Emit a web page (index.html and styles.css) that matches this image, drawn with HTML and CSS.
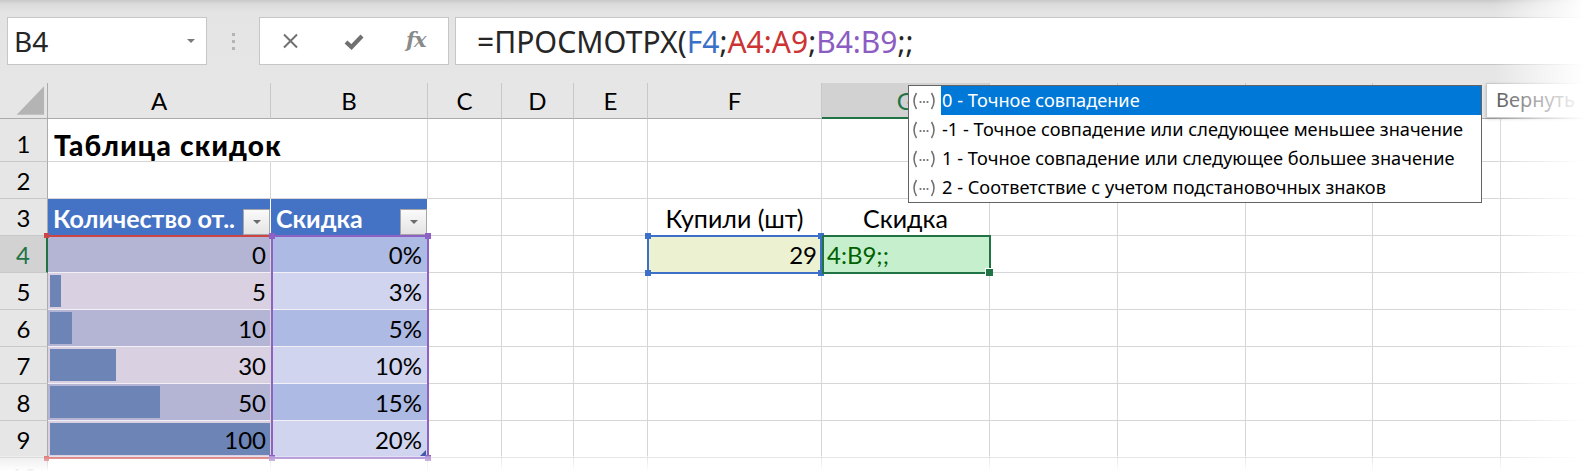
FILE: index.html
```html
<!DOCTYPE html>
<html lang="ru">
<head>
<meta charset="utf-8">
<title>Таблица скидок</title>
<link rel="stylesheet" href="styles.css">
</head>
<body>
<div class="app">
  <div class="topbar">
    <div class="namebox"><span class="nb-text">B4</span><span class="nb-arrow"></span></div>
    <div class="grip"><i></i><i></i><i></i></div>
    <div class="fxbox">
      <svg class="ico ico-x" width="17" height="16" viewBox="0 0 17 16"><path d="M2 1.5 L15 14.5 M15 1.5 L2 14.5"/></svg>
      <svg class="ico ico-check" width="20" height="17" viewBox="0 0 20 17"><path d="M2 9 L7.5 14 L18 3"/></svg>
      <span class="fx">fx</span>
    </div>
    <div class="formula">=ПРОСМОТРХ(<span class="ref-f">F4</span>;<span class="ref-a">A4:A9</span>;<span class="ref-b">B4:B9</span>;;</div>
  </div>

  <div class="sheet">
    <div class="cells">
      <!-- header row -->
      <div class="c corner"><svg width="48" height="36" viewBox="0 0 48 36"><path d="M17 33 L45 33 L45 4 Z"/></svg></div>
      <div class="c ch">A</div><div class="c ch">B</div><div class="c ch">C</div><div class="c ch">D</div><div class="c ch">E</div><div class="c ch">F</div><div class="c ch act">G</div><div class="c ch">H</div><div class="c ch">I</div><div class="c ch">J</div><div class="c ch">K</div><div class="c ch">L</div>

      <!-- row 1 -->
      <div class="c rh">1</div>
      <div class="c title">Таблица скидок</div><div class="c"></div><div class="c"></div><div class="c"></div><div class="c"></div><div class="c"></div><div class="c"></div><div class="c"></div><div class="c"></div><div class="c"></div><div class="c"></div><div class="c"></div>

      <!-- row 2 -->
      <div class="c rh">2</div>
      <div class="c"></div><div class="c"></div><div class="c"></div><div class="c"></div><div class="c"></div><div class="c"></div><div class="c"></div><div class="c"></div><div class="c"></div><div class="c"></div><div class="c"></div><div class="c"></div>

      <!-- row 3 -->
      <div class="c rh">3</div>
      <div class="c th"><span class="th-text">Количество от..</span><span class="fb"></span></div>
      <div class="c th"><span class="th-text">Скидка</span><span class="fb"></span></div>
      <div class="c"></div><div class="c"></div><div class="c"></div>
      <div class="c ctr">Купили (шт)</div>
      <div class="c ctr">Скидка</div>
      <div class="c"></div><div class="c"></div><div class="c"></div><div class="c"></div><div class="c"></div>

      <!-- row 4 -->
      <div class="c rh act">4</div>
      <div class="c num qa odd">0</div>
      <div class="c num pb odd">0%</div>
      <div class="c"></div><div class="c"></div><div class="c"></div>
      <div class="c num inp">29</div>
      <div class="c edit">4:B9;;</div>
      <div class="c"></div><div class="c"></div><div class="c"></div><div class="c"></div><div class="c"></div>

      <!-- row 5 -->
      <div class="c rh">5</div>
      <div class="c num qa even bar" style="--w: 11px">5</div>
      <div class="c num pb even">3%</div>
      <div class="c"></div><div class="c"></div><div class="c"></div><div class="c"></div><div class="c"></div><div class="c"></div><div class="c"></div><div class="c"></div><div class="c"></div><div class="c"></div>

      <!-- row 6 -->
      <div class="c rh">6</div>
      <div class="c num qa odd bar" style="--w: 22px">10</div>
      <div class="c num pb odd">5%</div>
      <div class="c"></div><div class="c"></div><div class="c"></div><div class="c"></div><div class="c"></div><div class="c"></div><div class="c"></div><div class="c"></div><div class="c"></div><div class="c"></div>

      <!-- row 7 -->
      <div class="c rh">7</div>
      <div class="c num qa even bar" style="--w: 66px">30</div>
      <div class="c num pb even">10%</div>
      <div class="c"></div><div class="c"></div><div class="c"></div><div class="c"></div><div class="c"></div><div class="c"></div><div class="c"></div><div class="c"></div><div class="c"></div><div class="c"></div>

      <!-- row 8 -->
      <div class="c rh">8</div>
      <div class="c num qa odd bar" style="--w: 110px">50</div>
      <div class="c num pb odd">15%</div>
      <div class="c"></div><div class="c"></div><div class="c"></div><div class="c"></div><div class="c"></div><div class="c"></div><div class="c"></div><div class="c"></div><div class="c"></div><div class="c"></div>

      <!-- row 9 -->
      <div class="c rh">9</div>
      <div class="c num qa even bar" style="--w: 220px">100</div>
      <div class="c num pb even last">20%<span class="tcorner"></span></div>
      <div class="c"></div><div class="c"></div><div class="c"></div><div class="c"></div><div class="c"></div><div class="c"></div><div class="c"></div><div class="c"></div><div class="c"></div><div class="c"></div>

      <!-- row 10 -->
      <div class="c rh">10</div>
      <div class="c"></div><div class="c"></div><div class="c"></div><div class="c"></div><div class="c"></div><div class="c"></div><div class="c"></div><div class="c"></div><div class="c"></div><div class="c"></div><div class="c"></div><div class="c"></div>
    </div>

    <div class="marks">
      <div class="rng rng-a"><i class="h tl"></i><i class="h bl"></i></div>
      <div class="rng rng-b"><i class="h tl"></i><i class="h tr"></i><i class="h bl"></i><i class="h br"></i></div>
      <div class="rng rng-f"><i class="h tl"></i><i class="h tr"></i><i class="h bl"></i><i class="h br"></i></div>
      <div class="rng rng-g"><i class="fill"></i></div>
    </div>
  </div>

  <div class="dropdown">
    <div class="dd-item sel"><svg class="dd-ico" width="28" height="20" viewBox="0 0 28 20"><path d="M6.5 2 Q1.5 10 6.5 18 M21.5 2 Q26.5 10 21.5 18"/><circle cx="10.5" cy="11" r="1.1"/><circle cx="14" cy="11" r="1.1"/><circle cx="17.5" cy="11" r="1.1"/></svg><span class="dd-text">0 - Точное совпадение</span></div>
    <div class="dd-item"><svg class="dd-ico" width="28" height="20" viewBox="0 0 28 20"><path d="M6.5 2 Q1.5 10 6.5 18 M21.5 2 Q26.5 10 21.5 18"/><circle cx="10.5" cy="11" r="1.1"/><circle cx="14" cy="11" r="1.1"/><circle cx="17.5" cy="11" r="1.1"/></svg><span class="dd-text">-1 - Точное совпадение или следующее меньшее значение</span></div>
    <div class="dd-item"><svg class="dd-ico" width="28" height="20" viewBox="0 0 28 20"><path d="M6.5 2 Q1.5 10 6.5 18 M21.5 2 Q26.5 10 21.5 18"/><circle cx="10.5" cy="11" r="1.1"/><circle cx="14" cy="11" r="1.1"/><circle cx="17.5" cy="11" r="1.1"/></svg><span class="dd-text">1 - Точное совпадение или следующее большее значение</span></div>
    <div class="dd-item"><svg class="dd-ico" width="28" height="20" viewBox="0 0 28 20"><path d="M6.5 2 Q1.5 10 6.5 18 M21.5 2 Q26.5 10 21.5 18"/><circle cx="10.5" cy="11" r="1.1"/><circle cx="14" cy="11" r="1.1"/><circle cx="17.5" cy="11" r="1.1"/></svg><span class="dd-text">2 - Соответствие с учетом подстановочных знаков</span></div>
  </div>

  <div class="tooltip">Вернуть</div>

  <div class="fade fade-top"></div>
  <div class="fade fade-right"></div>
  <div class="fade fade-bottom"></div>
</div>
</body>
</html>
```

FILE: styles.css
```css
* { box-sizing: border-box; }
html, body { margin: 0; padding: 0; background: #fff; }

.app {
  position: relative;
  width: 1584px;
  height: 474px;
  overflow: hidden;
  font-family: "Noto Sans", "Open Sans", sans-serif;
}

/* ---------- formula bar ---------- */
.topbar {
  height: 83px;
  background: linear-gradient(#d6d6d6 0, #e4e4e4 12px, #e6e6e6 100%);
  display: flex;
  align-items: flex-start;
  padding: 17px 0 0 7px;
}
.namebox {
  width: 200px;
  height: 48px;
  background: #fff;
  border: 1px solid #c6c6c6;
  display: flex;
  align-items: center;
  padding-left: 6px;
}
.nb-text {
  font-size: 28px;
  color: #262626;
  line-height: 1;
  margin-top: -1px;
}
.nb-arrow {
  margin-left: auto;
  margin-right: 11px;
  width: 0; height: 0;
  border-left: 4px solid transparent;
  border-right: 4px solid transparent;
  border-top: 4px solid #7a7a7a;
}
.grip {
  width: 52px;
  height: 48px;
  display: flex;
  flex-direction: column;
  align-items: center;
  justify-content: center;
  gap: 4px;
}
.grip i {
  display: block;
  width: 3px;
  height: 3px;
  background: #b4b4b4;
}
.fxbox {
  width: 190px;
  height: 48px;
  background: #fff;
  border: 1px solid #c6c6c6;
  display: flex;
  align-items: center;
  padding-left: 22px;
}
.ico path { fill: none; stroke: #707070; }
.ico-x path { stroke-width: 2; }
.ico-check { margin-left: 45px; }
.ico-check path { stroke-width: 4.2; stroke-linejoin: miter; }
.fx {
  margin-left: 42px;
  font-family: "DejaVu Serif", "Liberation Serif", serif;
  font-style: italic;
  font-weight: 700;
  font-size: 21px;
  color: #8a8a8a;
  letter-spacing: -1px;
  line-height: 1;
  margin-top: -4px;
}
.formula {
  margin-left: 6px;
  flex: 1;
  height: 48px;
  background: #fff;
  border: 1px solid #c6c6c6;
  border-right: none;
  padding-left: 21px;
  display: flex;
  align-items: center;
  font-size: 30px;
  color: #262626;
  white-space: nowrap;
}
.ref-f { color: #3a70c7; }
.ref-a { color: #cc3333; }
.ref-b { color: #8b5cc2; }

/* ---------- sheet ---------- */
.sheet {
  position: relative;
}
.cells, .marks {
  display: grid;
  grid-template-columns: 48px 223px 157px 74px 72px 74px 174px 168px 128px 128px 127px 128px 100px;
  grid-template-rows: 36px 43px repeat(9, 37px);
}
.marks {
  position: absolute;
  inset: 0;
  pointer-events: none;
}
.c {
  border-right: 1px solid #d6d6d6;
  border-bottom: 1px solid #d6d6d6;
  display: flex;
  align-items: flex-end;
  padding: 0 4px 3px 4px;
  font-family: "Lato", "Liberation Sans", sans-serif;
  font-size: 24px;
  line-height: 28px;
  color: #000;
  white-space: nowrap;
  min-width: 0;
}
.corner {
  background: #e6e6e6;
  border-right-color: #ababab;
  border-bottom-color: #ababab;
  padding: 0;
}
.corner svg { display: block; }
.corner path { fill: #b4b4b4; }
.ch {
  background: #e6e6e6;
  border-right-color: #c8c8c8;
  border-bottom-color: #ababab;
  justify-content: center;
  padding-bottom: 3px;
}
.ch.act {
  background: #d2d2d2;
  color: #217346;
  border-bottom: 2px solid #217346;
  padding-bottom: 2px;
}
.rh {
  background: #e6e6e6;
  border-right-color: #ababab;
  border-bottom-color: #c8c8c8;
  justify-content: center;
}
.rh.act {
  background: #d2d2d2;
  color: #217346;
  border-right: 2px solid #217346;
}
.title {
  font-weight: 900;
  font-size: 28px;
  letter-spacing: 1.2px;
  overflow: visible;
  border-right-color: transparent;
  position: relative;
  z-index: 1;
  padding-left: 6px;
  padding-bottom: 2px;
}
.ctr { justify-content: center; font-size: 25px; }
.num { justify-content: flex-end; }

.th {
  background: #4472c4;
  color: #fff;
  font-weight: 700;
  font-size: 25px;
  border-right-color: #fff;
  border-bottom-color: #4472c4;
  padding: 0 0 3px 5px;
}
.th-text {
  flex: 1;
  overflow: hidden;
  min-width: 0;
}
.fb {
  flex: none;
  width: 27px;
  height: 26px;
  margin-bottom: -3px;
  background: linear-gradient(#fafafa, #e4e4e4);
  border: 1px solid #a6a6a6;
  position: relative;
}
.fb::after {
  content: "";
  position: absolute;
  left: 9px;
  top: 10px;
  border-left: 4px solid transparent;
  border-right: 4px solid transparent;
  border-top: 4px solid #6b6b6b;
}

.qa, .pb { border-bottom-color: #f3eff6; }
.qa.odd { background-color: #b4b5d4; }
.qa.even { background-color: #d9d1e1; }
.pb.odd { background-color: #adbae3; }
.pb.even { background-color: #d0d4ee; }
.pb { padding-right: 5px; position: relative; }
.bar {
  background-image: linear-gradient(#6d84b7, #6d84b7);
  background-repeat: no-repeat;
  background-position: 2px 2px;
  background-size: var(--w) 32px;
}
.tcorner {
  position: absolute;
  right: 1px;
  bottom: 1px;
  width: 0; height: 0;
  border-left: 6px solid transparent;
  border-bottom: 6px solid #3f5aa8;
}
.inp {
  background: #ebf1d1;
  padding-right: 4px;
}
.edit {
  background: #c6efce;
  color: #006100;
  padding-left: 5px;
}

/* ---------- reference range marks ---------- */
.rng { position: relative; grid-row: 5 / 11; }
.rng .h {
  position: absolute;
  width: 6px;
  height: 6px;
}
.rng-a {
  grid-column: 2 / 3;
  margin: -1px 0 -1px 0;
  border-top: 2px solid #cc4444;
  border-bottom: 2px solid #cc4444;
}
.rng-a .h { background: #cc4444; width: 5px; height: 5px; }
.rng-a .tl { left: 0; top: -4px; }
.rng-a .bl { left: 0; bottom: -4px; }

.rng-b {
  grid-column: 3 / 4;
  margin: -1px -1px -1px 0;
  border: 2px solid #8e62c4;
}
.rng-b .h { background: #8e62c4; }
.rng-f {
  grid-column: 7 / 8;
  grid-row: 5 / 6;
  margin: -1px 0 -1px -1px;
  border: 2px solid #3c6fc8;
}
.rng-f .h { background: #3c6fc8; }
.h.tl { left: -4px; top: -4px; }
.h.tr { right: -4px; top: -4px; }
.h.bl { left: -4px; bottom: -4px; }
.h.br { right: -4px; bottom: -4px; }

.rng-g {
  grid-column: 8 / 9;
  grid-row: 5 / 6;
  margin: -1px -1px -1px 0;
  border: 2px solid #217346;
}
.rng-g .fill {
  position: absolute;
  right: -4px;
  bottom: -4px;
  width: 7px;
  height: 7px;
  background: #217346;
  border-left: 1px solid #fff;
  border-top: 1px solid #fff;
  box-sizing: content-box;
}

/* ---------- autocomplete dropdown ---------- */
.dropdown {
  position: absolute;
  left: 908px;
  top: 85px;
  width: 574px;
  background: #fff;
  border: 1px solid #646464;
  z-index: 5;
}
.dd-item {
  display: flex;
  align-items: center;
  height: 29px;
  white-space: nowrap;
}
.dd-ico {
  flex: none;
  width: 28px;
  margin: 0 3px 0 1px;
}
.dd-ico path { fill: none; stroke: #6e6e6e; stroke-width: 1.5; }
.dd-ico circle { fill: #6e6e6e; }
.dd-text {
  flex: 1;
  height: 29px;
  line-height: 29px;
  font-size: 18.2px;
  color: #000;
  padding-left: 1px;
}
.dd-item.sel .dd-text {
  background: #0078d7;
  color: #fff;
}

/* ---------- tooltip ---------- */
.tooltip {
  position: absolute;
  left: 1486px;
  top: 83px;
  width: 160px;
  height: 35px;
  background: #fff;
  border: 1px solid #c8c8c8;
  box-shadow: 0 1px 3px rgba(0,0,0,0.18);
  font-size: 20px;
  line-height: 32px;
  color: #555;
  padding-left: 9px;
  z-index: 5;
}

/* ---------- edge fades ---------- */
.fade { position: absolute; pointer-events: none; z-index: 10; }
.fade-right {
  top: 0;
  right: 0;
  width: 90px;
  height: 474px;
  background: linear-gradient(to right, rgba(255,255,255,0) 0, rgba(255,255,255,0.55) 50%, #fff 100%);
}
.fade-bottom {
  left: 0;
  bottom: 0;
  width: 1584px;
  height: 18px;
  background: linear-gradient(rgba(255,255,255,0.3), #fff 85%);
}
.fade-top {
  left: 0;
  top: 0;
  width: 1584px;
  height: 4px;
  background: linear-gradient(rgba(0,0,0,0.06), rgba(0,0,0,0));
}
```
